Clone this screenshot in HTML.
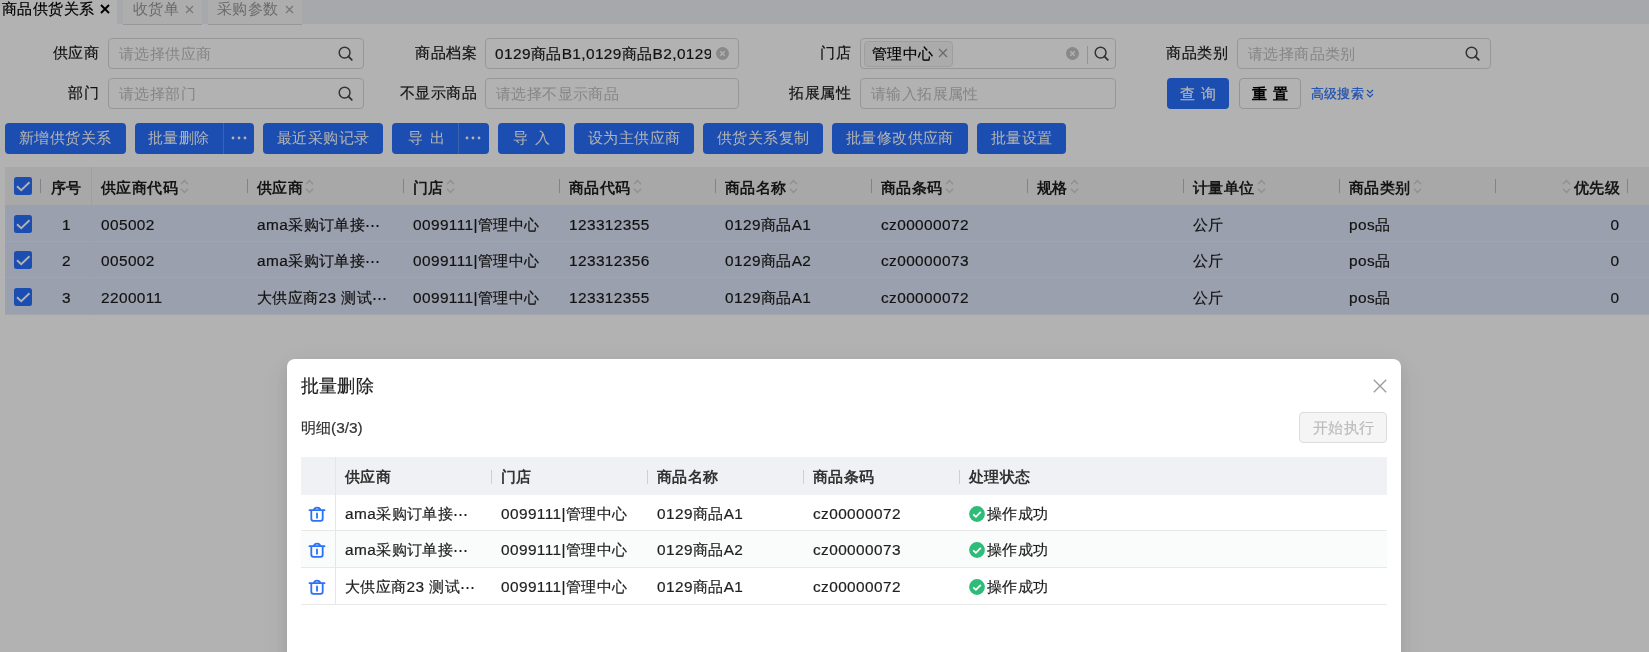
<!DOCTYPE html>
<html><head><meta charset="utf-8"><style>
*{box-sizing:border-box;margin:0;padding:0}
html,body{width:1649px;height:652px;overflow:hidden;background:#fff;font-family:"Liberation Sans",sans-serif;font-size:15.4px;color:#333;letter-spacing:0.4px;-webkit-text-stroke:0.2px currentColor}
.ht,.mht,.btn,.ph,.tab{-webkit-text-stroke:0}
.a{position:absolute;white-space:nowrap}
.tabbar{position:absolute;left:117px;top:0;width:1532px;height:24px;background:#eef1f6}
.tab{position:absolute;top:0;height:24.8px;background:#f8f8f8;border-bottom:1.2px solid #d9d9d9;color:#999;line-height:19px}
.lbl{position:absolute;height:30px;line-height:30px;text-align:right;color:#1a1a1a;white-space:nowrap}
.inp{position:absolute;height:30.5px;border:1px solid #d9d9d9;border-radius:4px;background:#fff}
.ph{position:absolute;left:10px;top:1px;line-height:28px;color:#c0c0c0;white-space:nowrap}
.val{position:absolute;left:9px;top:1px;line-height:28px;color:#1a1a1a;white-space:nowrap}
.srch{position:absolute;top:7px;width:15px;height:15px}
.btn{position:absolute;top:123px;height:31px;background:#2870fc;border-radius:4px;color:#fff;line-height:30px;white-space:nowrap}
.btn span{position:absolute;top:0}
.dv{position:absolute;top:0;width:1px;height:31px;background:#5a8ffa}
.th{position:absolute;left:5px;top:167px;width:1644px;height:38px;background:#f1f1f2}
.tr{position:absolute;left:5px;width:1644px;background:#dfe6f9}
.hs{position:absolute;top:179px;width:1.2px;height:14px;background:#b9bcc6}
.ht{position:absolute;top:168.5px;line-height:38px;font-weight:bold;color:#1f1f1f;white-space:nowrap}
.td{position:absolute;color:#1a1a1a;white-space:nowrap}
.cb{position:absolute;left:14px;width:18px;height:18px;background:#2870fc;border-radius:2.5px}
.overlay{position:absolute;left:0;top:0;width:1649px;height:652px;background:rgba(0,0,0,0.3)}
.modal{position:absolute;left:287px;top:359px;width:1114px;height:320px;background:#fff;border-radius:8px;box-shadow:0 6px 16px rgba(0,0,0,0.08),0 3px 6px -4px rgba(0,0,0,0.12),0 9px 28px 8px rgba(0,0,0,0.05)}
.mh{position:absolute;left:14px;top:98px;width:1086px;height:37.5px;background:#f0f1f4}
.mr{position:absolute;left:14px;width:1086px;border-bottom:1px solid #e8e8e8}
.mt{position:absolute;color:#1f1f1f;white-space:nowrap}
.mht{position:absolute;font-weight:bold;color:#333;white-space:nowrap;line-height:38px;top:99px}
.ms{position:absolute;top:111px;width:1px;height:14px;background:#d0d0d0}
</style></head><body>
<div style="position:absolute;left:0;top:0;width:1649px;height:652px;will-change:transform">
<div class="a" style="left:2px;top:-1px;line-height:19px;color:#000">商品供货关系</div>
<svg class="a" style="left:100px;top:4px" width="10" height="10" viewBox="0 0 10 10"><path d="M1 1L9 9M9 1L1 9" stroke="#000" stroke-width="1.9"/></svg>
<div class="tabbar"></div>
<div class="tab" style="left:123px;width:79px"><span class="a" style="left:10px;top:-1px">收货单</span><svg class="a" style="left:62px;top:5px" width="9" height="9" viewBox="0 0 9 9"><path d="M1 1L8 8M8 1L1 8" stroke="#aaa" stroke-width="1.3"/></svg></div>
<div class="tab" style="left:208px;width:94px"><span class="a" style="left:9px;top:-1px">采购参数</span><svg class="a" style="left:77px;top:5px" width="9" height="9" viewBox="0 0 9 9"><path d="M1 1L8 8M8 1L1 8" stroke="#aaa" stroke-width="1.3"/></svg></div>
<div class="lbl" style="left:0;width:99px;top:38px">供应商</div>
<div class="inp" style="left:108px;top:38px;width:256px"><span class="ph">请选择供应商</span><svg class="srch" style="left:229px" width="15" height="15" viewBox="0 0 15 15"><circle cx="6.6" cy="6.6" r="5.4" fill="none" stroke="#4a4a4a" stroke-width="1.5"/><path d="M10.4 10.4L13.8 13.8" stroke="#444" stroke-width="1.7" stroke-linecap="round"/></svg></div>
<div class="lbl" style="left:300px;width:477px;width:177px;top:38px">商品档案</div>
<div class="inp" style="left:485px;top:38px;width:254px"><span class="val" style="width:216px;overflow:hidden">0129商品B1,0129商品B2,0129i</span><svg class="a" style="left:230px;top:8px" width="13" height="13" viewBox="0 0 13 13"><circle cx="6.5" cy="6.5" r="6.5" fill="#c4c4c4"/><path d="M4.3 4.3L8.7 8.7M8.7 4.3L4.3 8.7" stroke="#fff" stroke-width="1.4"/></svg></div>
<div class="lbl" style="left:700px;width:151px;top:38px">门店</div>
<div class="inp" style="left:860px;top:38px;width:256px">
<div class="a" style="left:3px;top:2px;width:89px;height:25.5px;background:#f5f5f5;border:1px solid #e3e3e3;border-radius:4px"></div>
<span class="val" style="left:11px;color:#000">管理中心</span>
<svg class="a" style="left:77px;top:9px" width="10" height="10" viewBox="0 0 10 10"><path d="M1 1L9 9M9 1L1 9" stroke="#999" stroke-width="1.2"/></svg>
<svg class="a" style="left:205px;top:8px" width="13" height="13" viewBox="0 0 13 13"><circle cx="6.5" cy="6.5" r="6.5" fill="#c4c4c4"/><path d="M4.3 4.3L8.7 8.7M8.7 4.3L4.3 8.7" stroke="#fff" stroke-width="1.4"/></svg>
<div class="a" style="left:226px;top:6.5px;width:1px;height:18px;background:#d3d3d3"></div>
<svg class="srch" style="left:233px" width="15" height="15" viewBox="0 0 15 15"><circle cx="6.6" cy="6.6" r="5.4" fill="none" stroke="#4a4a4a" stroke-width="1.5"/><path d="M10.4 10.4L13.8 13.8" stroke="#444" stroke-width="1.7" stroke-linecap="round"/></svg>
</div>
<div class="lbl" style="left:1100px;width:128px;top:38px">商品类别</div>
<div class="inp" style="left:1237px;top:38px;width:254px"><span class="ph">请选择商品类别</span><svg class="srch" style="left:227px" width="15" height="15" viewBox="0 0 15 15"><circle cx="6.6" cy="6.6" r="5.4" fill="none" stroke="#4a4a4a" stroke-width="1.5"/><path d="M10.4 10.4L13.8 13.8" stroke="#444" stroke-width="1.7" stroke-linecap="round"/></svg></div>
<div class="lbl" style="left:0;width:99px;top:78px">部门</div>
<div class="inp" style="left:108px;top:78px;width:256px"><span class="ph">请选择部门</span><svg class="srch" style="left:229px" width="15" height="15" viewBox="0 0 15 15"><circle cx="6.6" cy="6.6" r="5.4" fill="none" stroke="#4a4a4a" stroke-width="1.5"/><path d="M10.4 10.4L13.8 13.8" stroke="#444" stroke-width="1.7" stroke-linecap="round"/></svg></div>
<div class="lbl" style="left:300px;width:177px;top:78px">不显示商品</div>
<div class="inp" style="left:485px;top:78px;width:254px"><span class="ph">请选择不显示商品</span></div>
<div class="lbl" style="left:700px;width:151px;top:78px">拓展属性</div>
<div class="inp" style="left:860px;top:78px;width:256px"><span class="ph">请输入拓展属性</span></div>
<div class="a" style="left:1167px;top:78px;width:62px;height:31px;background:#2870fc;border-radius:4px;color:#fff;line-height:32px;letter-spacing:5.5px;padding-left:13px">查询</div>
<div class="a" style="left:1239px;top:78px;width:62px;height:31px;border:1px solid #d6d6d6;background:#fff;border-radius:4px;color:#000;font-weight:bold;-webkit-text-stroke:0;line-height:29px;letter-spacing:5.5px;padding-left:12px">重置</div>
<div class="a" style="left:1311px;top:78px;line-height:31px;font-size:13px;letter-spacing:0.2px;color:#2870fc">高级搜索</div>
<svg class="a" style="left:1366px;top:89px" width="8" height="10" viewBox="0 0 8 10"><path d="M1 1L4 4L7 1M1 5L4 8L7 5" fill="none" stroke="#2870fc" stroke-width="1.2"/></svg>
<div class="btn" style="left:5px;width:121px"><span style="left:14px">新增供货关系</span></div>
<div class="btn" style="left:135px;width:119px"><span style="left:13px">批量删除</span><div class="dv" style="left:88px"></div><svg class="a" style="left:96px;top:13px" width="16" height="4" viewBox="0 0 16 4"><circle cx="2" cy="2" r="1.4" fill="#fff"/><circle cx="8" cy="2" r="1.4" fill="#fff"/><circle cx="14" cy="2" r="1.4" fill="#fff"/></svg></div>
<div class="btn" style="left:263px;width:120px"><span style="left:14px">最近采购记录</span></div>
<div class="btn" style="left:392px;width:97px"><span style="left:16px;letter-spacing:7px">导出</span><div class="dv" style="left:66px"></div><svg class="a" style="left:73px;top:13px" width="16" height="4" viewBox="0 0 16 4"><circle cx="2" cy="2" r="1.4" fill="#fff"/><circle cx="8" cy="2" r="1.4" fill="#fff"/><circle cx="14" cy="2" r="1.4" fill="#fff"/></svg></div>
<div class="btn" style="left:498px;width:67px"><span style="left:15px;letter-spacing:7px">导入</span></div>
<div class="btn" style="left:574px;width:120px"><span style="left:14px">设为主供应商</span></div>
<div class="btn" style="left:703px;width:120px"><span style="left:14px">供货关系复制</span></div>
<div class="btn" style="left:832px;width:136px"><span style="left:14px">批量修改供应商</span></div>
<div class="btn" style="left:977px;width:89px"><span style="left:14px">批量设置</span></div>
<div class="th"></div>
<div class="tr" style="top:205px;height:36.67px;border-bottom:1px solid #e9edf7"></div>
<div class="tr" style="top:241.67px;height:36.67px;border-bottom:1px solid #e9edf7"></div>
<div class="tr" style="top:278.33px;height:36.67px;border-bottom:1px solid #e9edf7"></div>
<div class="a" style="left:91px;top:167px;width:1px;height:148px;background:#e4e6ea"></div>
<div class="cb" style="top:177px"><svg class="a" style="left:0;top:0" width="18" height="18" viewBox="0 0 18 18"><path d="M3 9.3L7.2 13.1L15.5 5.3" fill="none" stroke="#fff" stroke-width="1.9"/></svg></div>
<div class="hs" style="left:40px"></div>
<div class="ht" style="left:51px">序号</div>
<div class="ht" style="left:101px">供应商代码</div>
<svg class="a" style="left:179.5px;top:179px" width="9" height="15" viewBox="0 0 9 15"><path d="M1 5.2L4.5 1.5L8 5.2M1 9.8L4.5 13.5L8 9.8" fill="none" stroke="#cdcdcd" stroke-width="1.3"/></svg>
<div class="hs" style="left:246.5px"></div>
<div class="ht" style="left:257px">供应商</div>
<svg class="a" style="left:304.5px;top:179px" width="9" height="15" viewBox="0 0 9 15"><path d="M1 5.2L4.5 1.5L8 5.2M1 9.8L4.5 13.5L8 9.8" fill="none" stroke="#cdcdcd" stroke-width="1.3"/></svg>
<div class="hs" style="left:402.5px"></div>
<div class="ht" style="left:413px">门店</div>
<svg class="a" style="left:445.5px;top:179px" width="9" height="15" viewBox="0 0 9 15"><path d="M1 5.2L4.5 1.5L8 5.2M1 9.8L4.5 13.5L8 9.8" fill="none" stroke="#cdcdcd" stroke-width="1.3"/></svg>
<div class="hs" style="left:558.5px"></div>
<div class="ht" style="left:569px">商品代码</div>
<svg class="a" style="left:632.5px;top:179px" width="9" height="15" viewBox="0 0 9 15"><path d="M1 5.2L4.5 1.5L8 5.2M1 9.8L4.5 13.5L8 9.8" fill="none" stroke="#cdcdcd" stroke-width="1.3"/></svg>
<div class="hs" style="left:714.5px"></div>
<div class="ht" style="left:725px">商品名称</div>
<svg class="a" style="left:788.5px;top:179px" width="9" height="15" viewBox="0 0 9 15"><path d="M1 5.2L4.5 1.5L8 5.2M1 9.8L4.5 13.5L8 9.8" fill="none" stroke="#cdcdcd" stroke-width="1.3"/></svg>
<div class="hs" style="left:870.5px"></div>
<div class="ht" style="left:881px">商品条码</div>
<svg class="a" style="left:944.5px;top:179px" width="9" height="15" viewBox="0 0 9 15"><path d="M1 5.2L4.5 1.5L8 5.2M1 9.8L4.5 13.5L8 9.8" fill="none" stroke="#cdcdcd" stroke-width="1.3"/></svg>
<div class="hs" style="left:1026.5px"></div>
<div class="ht" style="left:1037px">规格</div>
<svg class="a" style="left:1069.5px;top:179px" width="9" height="15" viewBox="0 0 9 15"><path d="M1 5.2L4.5 1.5L8 5.2M1 9.8L4.5 13.5L8 9.8" fill="none" stroke="#cdcdcd" stroke-width="1.3"/></svg>
<div class="hs" style="left:1182.5px"></div>
<div class="ht" style="left:1193px">计量单位</div>
<svg class="a" style="left:1256.5px;top:179px" width="9" height="15" viewBox="0 0 9 15"><path d="M1 5.2L4.5 1.5L8 5.2M1 9.8L4.5 13.5L8 9.8" fill="none" stroke="#cdcdcd" stroke-width="1.3"/></svg>
<div class="hs" style="left:1338.5px"></div>
<div class="ht" style="left:1349px">商品类别</div>
<svg class="a" style="left:1412.5px;top:179px" width="9" height="15" viewBox="0 0 9 15"><path d="M1 5.2L4.5 1.5L8 5.2M1 9.8L4.5 13.5L8 9.8" fill="none" stroke="#cdcdcd" stroke-width="1.3"/></svg>
<div class="hs" style="left:1494.5px"></div>
<div class="ht" style="left:1574px">优先级</div><svg class="a" style="left:1562px;top:179px" width="9" height="15" viewBox="0 0 9 15"><path d="M1 5.2L4.5 1.5L8 5.2M1 9.8L4.5 13.5L8 9.8" fill="none" stroke="#cdcdcd" stroke-width="1.3"/></svg><div class="hs" style="left:1627px"></div>
<div class="cb" style="top:214.5px"><svg class="a" style="left:0;top:0" width="18" height="18" viewBox="0 0 18 18"><path d="M3 9.3L7.2 13.1L15.5 5.3" fill="none" stroke="#fff" stroke-width="1.9"/></svg></div>
<div class="td" style="left:62px;top:205.7px;line-height:37px">1</div>
<div class="td" style="left:101px;top:205.7px;line-height:37px">005002</div>
<div class="td" style="left:257px;top:205.7px;line-height:37px">ama采购订单接⋯</div>
<div class="td" style="left:413px;top:205.7px;line-height:37px">0099111|管理中心</div>
<div class="td" style="left:569px;top:205.7px;line-height:37px">123312355</div>
<div class="td" style="left:725px;top:205.7px;line-height:37px">0129商品A1</div>
<div class="td" style="left:881px;top:205.7px;line-height:37px">cz00000072</div>
<div class="td" style="left:1193px;top:205.7px;line-height:37px">公斤</div>
<div class="td" style="left:1349px;top:205.7px;line-height:37px">pos品</div>
<div class="td" style="left:1500px;width:119.4px;text-align:right;top:205.7px;line-height:37px">0</div>
<div class="cb" style="top:251.17px"><svg class="a" style="left:0;top:0" width="18" height="18" viewBox="0 0 18 18"><path d="M3 9.3L7.2 13.1L15.5 5.3" fill="none" stroke="#fff" stroke-width="1.9"/></svg></div>
<div class="td" style="left:62px;top:242.36999999999998px;line-height:37px">2</div>
<div class="td" style="left:101px;top:242.36999999999998px;line-height:37px">005002</div>
<div class="td" style="left:257px;top:242.36999999999998px;line-height:37px">ama采购订单接⋯</div>
<div class="td" style="left:413px;top:242.36999999999998px;line-height:37px">0099111|管理中心</div>
<div class="td" style="left:569px;top:242.36999999999998px;line-height:37px">123312356</div>
<div class="td" style="left:725px;top:242.36999999999998px;line-height:37px">0129商品A2</div>
<div class="td" style="left:881px;top:242.36999999999998px;line-height:37px">cz00000073</div>
<div class="td" style="left:1193px;top:242.36999999999998px;line-height:37px">公斤</div>
<div class="td" style="left:1349px;top:242.36999999999998px;line-height:37px">pos品</div>
<div class="td" style="left:1500px;width:119.4px;text-align:right;top:242.36999999999998px;line-height:37px">0</div>
<div class="cb" style="top:287.83px"><svg class="a" style="left:0;top:0" width="18" height="18" viewBox="0 0 18 18"><path d="M3 9.3L7.2 13.1L15.5 5.3" fill="none" stroke="#fff" stroke-width="1.9"/></svg></div>
<div class="td" style="left:62px;top:279.03px;line-height:37px">3</div>
<div class="td" style="left:101px;top:279.03px;line-height:37px">2200011</div>
<div class="td" style="left:257px;top:279.03px;line-height:37px">大供应商23 测试⋯</div>
<div class="td" style="left:413px;top:279.03px;line-height:37px">0099111|管理中心</div>
<div class="td" style="left:569px;top:279.03px;line-height:37px">123312355</div>
<div class="td" style="left:725px;top:279.03px;line-height:37px">0129商品A1</div>
<div class="td" style="left:881px;top:279.03px;line-height:37px">cz00000072</div>
<div class="td" style="left:1193px;top:279.03px;line-height:37px">公斤</div>
<div class="td" style="left:1349px;top:279.03px;line-height:37px">pos品</div>
<div class="td" style="left:1500px;width:119.4px;text-align:right;top:279.03px;line-height:37px">0</div>
<div class="overlay"></div>
<div class="modal">
<div class="a" style="left:14px;top:14px;font-size:17.6px;line-height:26px;color:#222;letter-spacing:0.2px">批量删除</div>
<svg class="a" style="left:1086px;top:20px" width="14" height="14" viewBox="0 0 14 14"><path d="M0.8 0.8L13.2 13.2M13.2 0.8L0.8 13.2" stroke="#9a9a9a" stroke-width="1.3"/></svg>
<div class="a" style="left:14px;top:58px;line-height:22px;color:#333;letter-spacing:0">明细(3/3)</div>
<div class="a" style="left:1012px;top:53px;width:88px;height:31px;background:#f5f5f5;border:1px solid #dcdcdc;border-radius:4px;color:#bdbdbd;line-height:29px;padding-left:13px">开始执行</div>
<div class="mh"></div>
<div class="mht" style="left:58px">供应商</div>
<div class="mht" style="left:214px">门店</div>
<div class="ms" style="left:204px"></div>
<div class="mht" style="left:370px">商品名称</div>
<div class="ms" style="left:360px"></div>
<div class="mht" style="left:526px">商品条码</div>
<div class="ms" style="left:516px"></div>
<div class="mht" style="left:682px">处理状态</div>
<div class="ms" style="left:672px"></div>
<div class="mr" style="top:135.5px;height:36.7px;"></div>
<svg class="a" style="left:21px;top:145.5px" width="18" height="18" viewBox="0 0 18 18"><path d="M1.5 5.2H16.5M5.8 5.2A3.2 2.6 0 0 1 12.2 5.2M3.3 5.2V13.8Q3.3 15.8 5.3 15.8H12.7Q14.7 15.8 14.7 13.8V5.2M9 8.3V12.8" fill="none" stroke="#2a72f8" stroke-width="1.8" stroke-linecap="round"/></svg>
<div class="mt" style="left:58px;top:135.5px;line-height:37px">ama采购订单接⋯</div>
<div class="mt" style="left:214px;top:135.5px;line-height:37px">0099111|管理中心</div>
<div class="mt" style="left:370px;top:135.5px;line-height:37px">0129商品A1</div>
<div class="mt" style="left:526px;top:135.5px;line-height:37px">cz00000072</div>
<svg class="a" style="left:681.5px;top:146.5px" width="16" height="16" viewBox="0 0 16 16"><circle cx="8" cy="8" r="7.9" fill="#2ebd78"/><path d="M4.2 8.3L6.9 10.8L11.8 5.8" fill="none" stroke="#fff" stroke-width="1.8"/></svg>
<div class="mt" style="left:700px;top:135.5px;line-height:37px">操作成功</div>
<div class="mr" style="top:172.2px;height:36.7px;background:#fafbfb;"></div>
<svg class="a" style="left:21px;top:182.2px" width="18" height="18" viewBox="0 0 18 18"><path d="M1.5 5.2H16.5M5.8 5.2A3.2 2.6 0 0 1 12.2 5.2M3.3 5.2V13.8Q3.3 15.8 5.3 15.8H12.7Q14.7 15.8 14.7 13.8V5.2M9 8.3V12.8" fill="none" stroke="#2a72f8" stroke-width="1.8" stroke-linecap="round"/></svg>
<div class="mt" style="left:58px;top:172.2px;line-height:37px">ama采购订单接⋯</div>
<div class="mt" style="left:214px;top:172.2px;line-height:37px">0099111|管理中心</div>
<div class="mt" style="left:370px;top:172.2px;line-height:37px">0129商品A2</div>
<div class="mt" style="left:526px;top:172.2px;line-height:37px">cz00000073</div>
<svg class="a" style="left:681.5px;top:183.2px" width="16" height="16" viewBox="0 0 16 16"><circle cx="8" cy="8" r="7.9" fill="#2ebd78"/><path d="M4.2 8.3L6.9 10.8L11.8 5.8" fill="none" stroke="#fff" stroke-width="1.8"/></svg>
<div class="mt" style="left:700px;top:172.2px;line-height:37px">操作成功</div>
<div class="mr" style="top:208.9px;height:36.7px;"></div>
<svg class="a" style="left:21px;top:218.9px" width="18" height="18" viewBox="0 0 18 18"><path d="M1.5 5.2H16.5M5.8 5.2A3.2 2.6 0 0 1 12.2 5.2M3.3 5.2V13.8Q3.3 15.8 5.3 15.8H12.7Q14.7 15.8 14.7 13.8V5.2M9 8.3V12.8" fill="none" stroke="#2a72f8" stroke-width="1.8" stroke-linecap="round"/></svg>
<div class="mt" style="left:58px;top:208.9px;line-height:37px">大供应商23 测试⋯</div>
<div class="mt" style="left:214px;top:208.9px;line-height:37px">0099111|管理中心</div>
<div class="mt" style="left:370px;top:208.9px;line-height:37px">0129商品A1</div>
<div class="mt" style="left:526px;top:208.9px;line-height:37px">cz00000072</div>
<svg class="a" style="left:681.5px;top:219.9px" width="16" height="16" viewBox="0 0 16 16"><circle cx="8" cy="8" r="7.9" fill="#2ebd78"/><path d="M4.2 8.3L6.9 10.8L11.8 5.8" fill="none" stroke="#fff" stroke-width="1.8"/></svg>
<div class="mt" style="left:700px;top:208.9px;line-height:37px">操作成功</div>
<div class="a" style="left:48px;top:98px;width:1px;height:147px;background:#e6e6e6"></div>
</div>
</div></body></html>
